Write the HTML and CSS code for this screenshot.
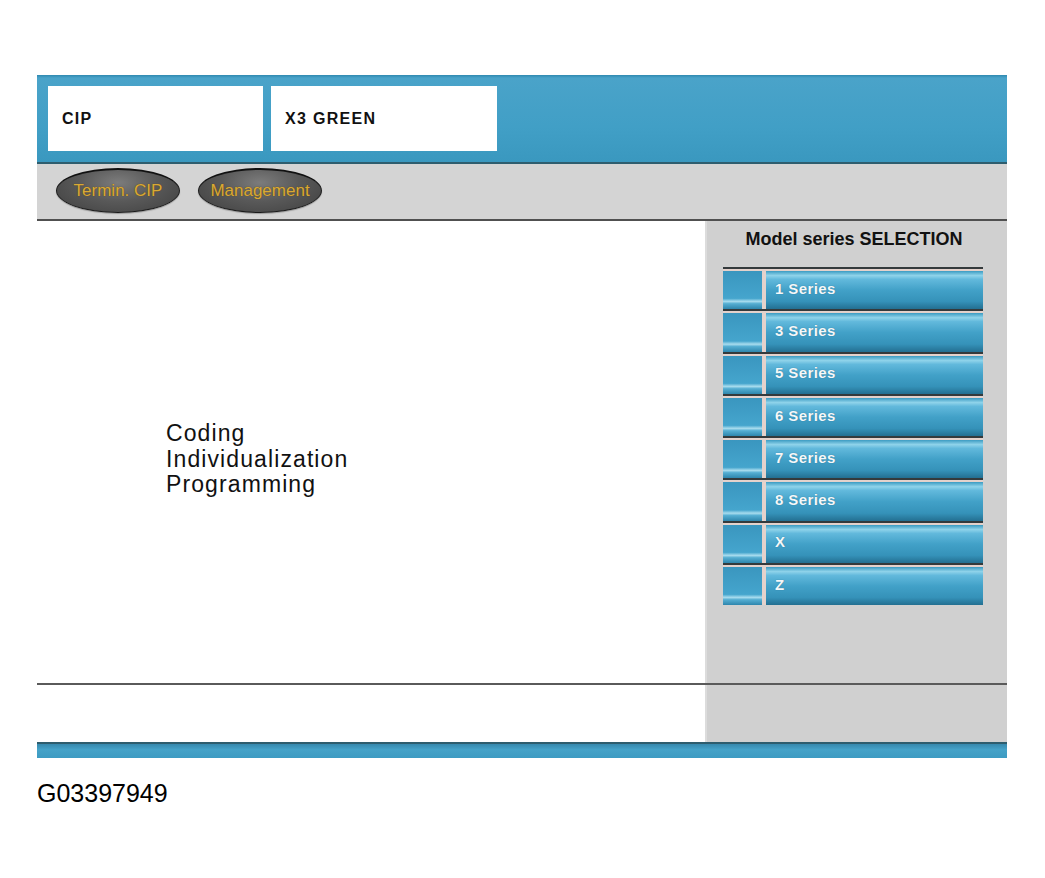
FILE: index.html
```html
<!DOCTYPE html>
<html>
	<head>
		<meta charset="UTF-8">
		<title>CIP</title>
		<link rel="stylesheet" href="styles.css">
	</head>
	<body>
		<div class="page">
			<div class="screen">
				<div class="header">
					<div class="title-box title-main">CIP</div>
					<div class="title-box title-sub">X3 GREEN</div>
				</div>
				<div class="toolbar">
					<a href="javascript:;" class="pill">Termin. CIP</a>
					<a href="javascript:;" class="pill">Management</a>
				</div>
				<div class="main">
					<div class="content">
						<p class="intro">Coding<br>Individualization<br>Programming</p>
					</div>
					<div class="side">
						<h2 class="side-title">Model series SELECTION</h2>
						<ul class="series">
							<li><span class="marker"></span><span class="label">1 Series</span></li>
							<li><span class="marker"></span><span class="label">3 Series</span></li>
							<li><span class="marker"></span><span class="label">5 Series</span></li>
							<li><span class="marker"></span><span class="label">6 Series</span></li>
							<li><span class="marker"></span><span class="label">7 Series</span></li>
							<li><span class="marker"></span><span class="label">8 Series</span></li>
							<li><span class="marker"></span><span class="label">X</span></li>
							<li><span class="marker"></span><span class="label">Z</span></li>
						</ul>
					</div>
				</div>
				<div class="status">
					<div class="status-left"></div>
					<div class="status-right"></div>
				</div>
				<div class="footer-bar"></div>
			</div>
			<div class="caption">G03397949</div>
		</div>
	</body>
</html>
```

FILE: styles.css
```css
body {
	margin: 0;
	background-color: #fff;
	font-family: "Liberation Sans", Arial, sans-serif;
}
.page {
	padding: 75px 0 0 37px;
}
.screen {
	width: 970px;
}

/* blue title bar */
.header {
	height: 89px;
	box-sizing: border-box;
	padding: 11px 11px;
	display: flex;
	gap: 8px;
	background: linear-gradient(to bottom, #2f89b0 0, #4aa3c9 3px, #419fc6 60%, #3a98bf 100%);
	border-bottom: 2px solid #2e5d6e;
}
.title-box {
	height: 65px;
	background-color: #fff;
	display: flex;
	align-items: center;
	padding-left: 14px;
	box-sizing: border-box;
	font-size: 16px;
	font-weight: bold;
	letter-spacing: 1.3px;
	color: #111;
}
.title-main {
	width: 215px;
}
.title-sub {
	width: 226px;
}

/* grey toolbar with oval buttons */
.toolbar {
	height: 57px;
	box-sizing: border-box;
	padding: 4px 0 0 19px;
	display: flex;
	gap: 18px;
	align-items: flex-start;
	background-color: #d4d4d4;
	border-bottom: 2px solid #505050;
}
.pill {
	width: 124px;
	height: 45px;
	box-sizing: border-box;
	border-radius: 50%;
	border: 1px solid #1a1a1a;
	border-top: 2px solid #111;
	background: radial-gradient(ellipse at 50% 30%, #7c7c7c 0, #595959 45%, #3f3f3f 100%);
	box-shadow: 0 1px 1px #9a9a9a;
	display: flex;
	align-items: center;
	justify-content: center;
	font-size: 17px;
	color: #d9a935;
	text-decoration: none;
	text-shadow: 0 0 1px #5a4210;
}

/* main work area */
.main {
	display: flex;
	height: 462px;
}
.content {
	width: 668px;
	background-color: #fff;
	padding: 200px 0 0 129px;
	box-sizing: border-box;
}
.intro {
	margin: 0;
	font-size: 23px;
	line-height: 25.5px;
	letter-spacing: 1.1px;
	color: #111;
}
.side {
	width: 302px;
	background-color: #d0d0d0;
	border-left: 2px solid #dcdcdc;
	box-sizing: border-box;
	padding: 8px 24px 0 16px;
}
.side-title {
	margin: 0 0 18px;
	text-align: center;
	font-size: 18px;
	line-height: 20px;
	font-weight: bold;
	color: #111;
	padding-left: 2px;
}
.series {
	margin: 0;
	padding: 0;
	list-style: none;
}
.series li {
	height: 42.3px;
	box-sizing: border-box;
	display: flex;
	gap: 4px;
	border-top: 2px solid #343a3c;
	padding-top: 2px;
	background-color: #e4d2cc;
}
.series .marker {
	width: 39px;
	background: linear-gradient(to bottom, #3a96bf 0, #45a5cd 72%, #a8dcee 80%, #55aed2 86%, #2e86ad 100%);
}
.series .label {
	flex: 1;
	display: flex;
	align-items: center;
	padding: 0 0 4px 9px;
	background: linear-gradient(to bottom, #3b9bc2 0, #8fd3ea 12%, #62b9dc 22%, #42a1c8 50%, #3592b9 80%, #236f91 100%);
	font-size: 15px;
	font-weight: bold;
	letter-spacing: 0.4px;
	color: #f4f8fa;
	text-shadow: 0 0 1px #2a6f8c;
}

/* bottom status strip */
.status {
	display: flex;
	height: 59px;
	border-top: 2px solid #5a5a5a;
	box-sizing: border-box;
}
.status-left {
	width: 668px;
	background-color: #fff;
}
.status-right {
	flex: 1;
	background-color: #d0d0d0;
	border-left: 2px solid #dcdcdc;
}
.footer-bar {
	height: 16px;
	box-sizing: border-box;
	border-top: 2px solid #2e5d6e;
	background: linear-gradient(to bottom, #3688ad 0, #45a2c8 40%, #3d9bc2 100%);
}

.caption {
	margin-top: 21px;
	font-size: 25px;
	line-height: 28px;
	color: #000;
}
```
